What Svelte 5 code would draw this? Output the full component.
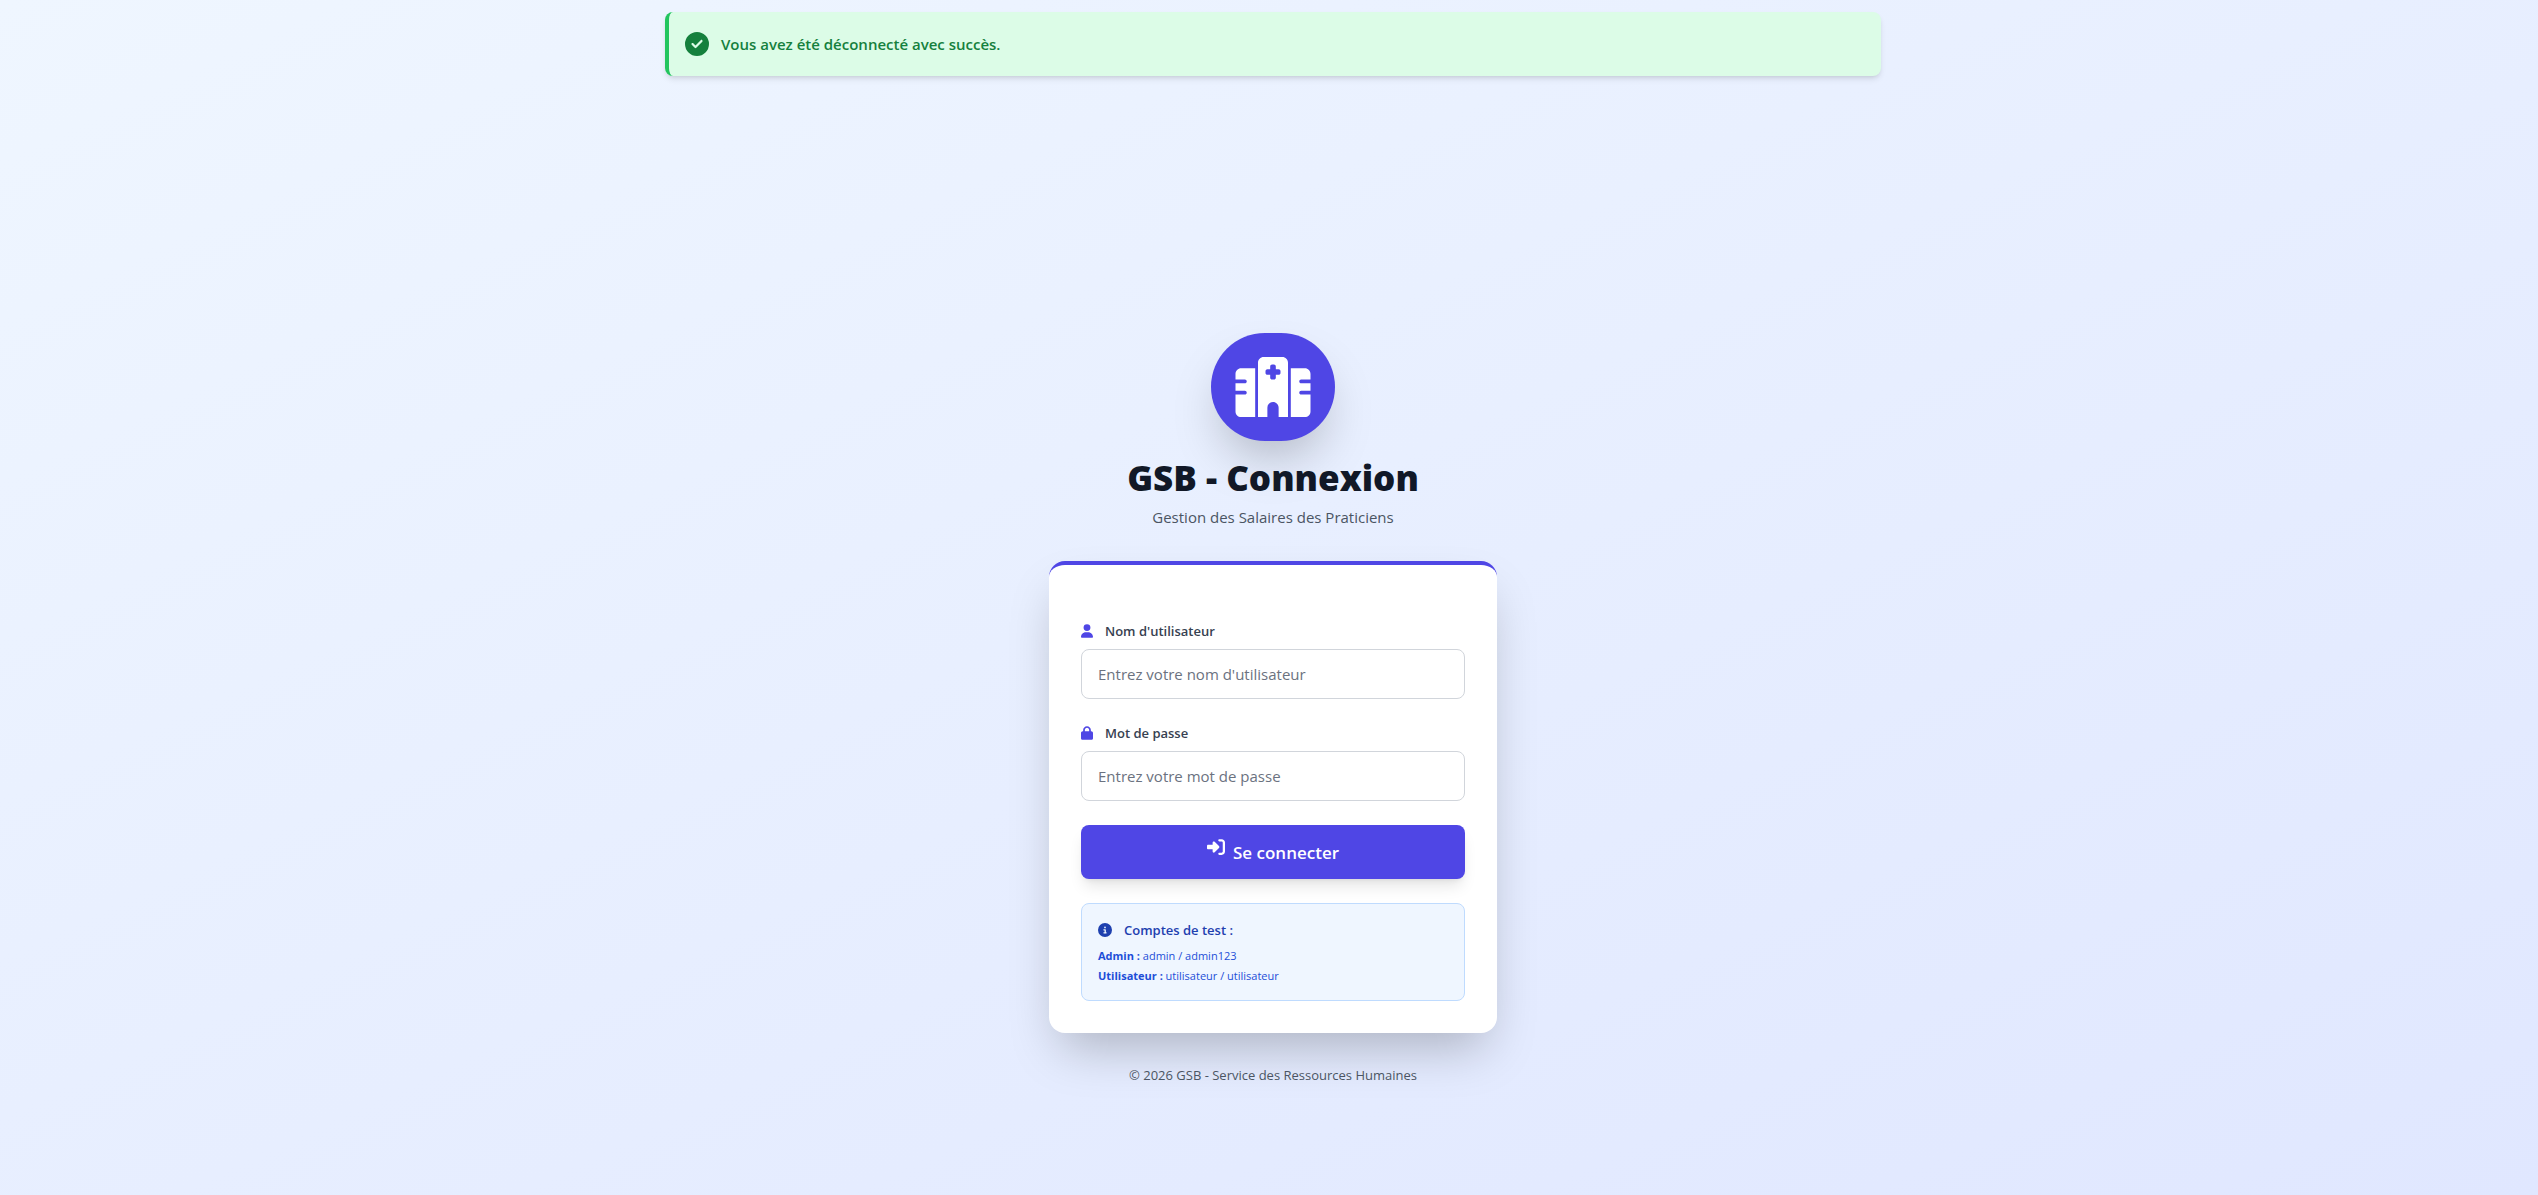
<script>
    const icons = {
        check: {
            box: '0 0 512 512',
            path: 'M256 512A256 256 0 1 0 256 0a256 256 0 1 0 0 512zM369 209L241 337c-9.4 9.4-24.6 9.4-33.9 0l-64-64c-9.4-9.4-9.4-24.6 0-33.9s24.6-9.4 33.9 0l47 47L335 175c9.4-9.4 24.6-9.4 33.9 0s9.4 24.6 0 33.9z'
        },
        hospital: {
            box: '0 0 640 512',
            path: 'M192 48c0-26.5 21.5-48 48-48H400c26.5 0 48 21.5 48 48V512H368V432c0-26.5-21.5-48-48-48s-48 21.5-48 48v80H192V48zM48 96H168V512H48c-26.5 0-48-21.5-48-48V320H80c8.8 0 16-7.2 16-16s-7.2-16-16-16H0V224H80c8.8 0 16-7.2 16-16s-7.2-16-16-16H0V144c0-26.5 21.5-48 48-48zm544 0c26.5 0 48 21.5 48 48v48H560c-8.8 0-16 7.2-16 16s7.2 16 16 16h80v64H560c-8.8 0-16 7.2-16 16s7.2 16 16 16h80V464c0 26.5-21.5 48-48 48H472V96H592zM312 64c-8.8 0-16 7.2-16 16v24H272c-8.8 0-16 7.2-16 16v16c0 8.8 7.2 16 16 16h24v24c0 8.8 7.2 16 16 16h16c8.8 0 16-7.2 16-16V152h24c8.8 0 16-7.2 16-16V120c0-8.8-7.2-16-16-16H344V80c0-8.8-7.2-16-16-16H312z'
        },
        user: {
            box: '0 0 448 512',
            path: 'M224 256A128 128 0 1 0 224 0a128 128 0 1 0 0 256zm-45.7 48C79.8 304 0 383.8 0 482.3C0 498.7 13.3 512 29.7 512H418.3c16.4 0 29.7-13.3 29.7-29.7C448 383.8 368.2 304 269.7 304H178.3z'
        },
        lock: {
            box: '0 0 448 512',
            path: 'M144 144v48H304V144c0-44.2-35.8-80-80-80s-80 35.8-80 80zM80 192V144C80 64.5 144.5 0 224 0s144 64.5 144 144v48h16c35.3 0 64 28.7 64 64V448c0 35.3-28.7 64-64 64H64c-35.3 0-64-28.7-64-64V256c0-35.3 28.7-64 64-64H80z'
        },
        login: {
            box: '0 0 512 512',
            path: 'M217.9 105.9L340.7 228.7c7.2 7.2 11.3 17.1 11.3 27.3s-4.1 20.1-11.3 27.3L217.9 406.1c-6.4 6.4-15 9.9-24 9.9c-18.7 0-33.9-15.2-33.9-33.9l0-62.1L32 320c-17.7 0-32-14.3-32-32l0-64c0-17.7 14.3-32 32-32l128 0 0-62.1c0-18.7 15.2-33.9 33.9-33.9c9 0 17.6 3.6 24 9.9zM352 416l64 0c17.7 0 32-14.3 32-32l0-256c0-17.7-14.3-32-32-32l-64 0c-17.7 0-32-14.3-32-32s14.3-32 32-32l64 0c53 0 96 43 96 96l0 256c0 53-43 96-96 96l-64 0c-17.7 0-32-14.3-32-32s14.3-32 32-32z'
        },
        info: {
            box: '0 0 512 512',
            path: 'M256 512A256 256 0 1 0 256 0a256 256 0 1 0 0 512zM216 336h24V272H216c-13.3 0-24-10.7-24-24s10.7-24 24-24h48c13.3 0 24 10.7 24 24v88h8c13.3 0 24 10.7 24 24s-10.7 24-24 24H216c-13.3 0-24-10.7-24-24s10.7-24 24-24zm40-208a32 32 0 1 1 0 64 32 32 0 1 1 0-64z'
        }
    };

    const accounts = [
        { role: 'Admin', login: 'admin', password: 'admin123' },
        { role: 'Utilisateur', login: 'utilisateur', password: 'utilisateur' }
    ];

    let username = $state('');
    let password = $state('');
</script>

{#snippet icon(name)}
    <svg class="icon icon-{name}" viewBox={icons[name].box} aria-hidden="true">
        <path d={icons[name].path} />
    </svg>
{/snippet}

<div class="page">
    <div class="messages">
        <div class="alert" role="status">
            {@render icon('check')}
            <span>Vous avez été déconnecté avec succès.</span>
        </div>
    </div>

    <main>
        <div class="login">
            <header>
                <div class="logo">{@render icon('hospital')}</div>
                <h1>GSB - Connexion</h1>
                <p>Gestion des Salaires des Praticiens</p>
            </header>

            <div class="card">
                <form onsubmit={(e) => e.preventDefault()}>
                    <div class="field">
                        <label for="username">{@render icon('user')}Nom d'utilisateur</label>
                        <input id="username" type="text" placeholder="Entrez votre nom d'utilisateur" bind:value={username}>
                    </div>
                    <div class="field">
                        <label for="password">{@render icon('lock')}Mot de passe</label>
                        <input id="password" type="password" placeholder="Entrez votre mot de passe" bind:value={password}>
                    </div>
                    <button type="submit">{@render icon('login')}Se connecter</button>
                </form>

                <div class="accounts">
                    <h2>{@render icon('info')}Comptes de test :</h2>
                    {#each accounts as account}
                        <p><strong>{account.role} :</strong> {account.login} / {account.password}</p>
                    {/each}
                </div>
            </div>

            <footer>© 2026 GSB - Service des Ressources Humaines</footer>
        </div>
    </main>
</div>

<style>
    :global(body) {
        margin: 0;
    }

    .page {
        background: linear-gradient(to bottom right, #eff6ff, #e0e7ff);
        box-sizing: border-box;
        color: #111827;
        display: flex;
        flex-direction: column;
        font-family: "Segoe UI", "Open Sans", "Noto Sans", sans-serif;
        font-size: 15px;
        line-height: 24px;
        min-height: 100vh;
        padding-left: 8px;
        padding-top: 12px;
    }

    h1,
    h2,
    p {
        margin: 0;
    }

    .icon {
        display: block;
        fill: currentColor;
        flex: none;
    }

    .messages {
        box-sizing: border-box;
        margin-inline: auto;
        max-width: 1280px;
        padding-inline: 32px;
        width: 100%;
    }

    .alert {
        align-items: center;
        background: #dcfce7;
        border-left: 4px solid #22c55e;
        border-radius: 8px;
        box-shadow: 0 4px 6px -1px rgb(0 0 0 / 0.1), 0 2px 4px -2px rgb(0 0 0 / 0.1);
        color: #15803d;
        display: flex;
        font-weight: 600;
        gap: 12px;
        padding: 20px 16px;
    }

    .icon-check {
        height: 24px;
        width: 24px;
    }

    main {
        align-items: center;
        display: flex;
        flex: 1;
        justify-content: center;
        padding: 147px 16px 0;
    }

    .login {
        max-width: 448px;
        width: 100%;
    }

    header {
        align-items: center;
        display: flex;
        flex-direction: column;
        margin-bottom: 32px;
        text-align: center;
    }

    .logo {
        background: #4f46e5;
        border-radius: 9999px;
        box-shadow: 0 25px 50px -12px rgb(0 0 0 / 0.25);
        color: #fff;
        margin-bottom: 16px;
        padding: 24px;
    }

    .icon-hospital {
        height: 60px;
        width: 76px;
    }

    h1 {
        font-size: 35px;
        font-weight: 800;
        line-height: 42px;
        margin-bottom: 6px;
    }

    header p {
        color: #4b5563;
    }

    .card {
        background: #fff;
        border-radius: 16px;
        border-top: 4px solid #4f46e5;
        box-shadow: 0 25px 50px -12px rgb(0 0 0 / 0.25);
        padding: 56px 32px 32px;
    }

    form {
        display: flex;
        flex-direction: column;
        gap: 24px;
    }

    .field {
        display: flex;
        flex-direction: column;
        gap: 8px;
    }

    label {
        align-items: center;
        color: #374151;
        display: flex;
        font-size: 13px;
        font-weight: 600;
        gap: 12px;
        line-height: 20px;
    }

    .icon-user,
    .icon-lock {
        color: #4f46e5;
        height: 14px;
        width: 12px;
    }

    input {
        background: #fff;
        border: 1px solid #d1d5db;
        border-radius: 8px;
        box-sizing: border-box;
        color: inherit;
        font: inherit;
        padding: 12px 16px;
        width: 100%;
    }

    input::placeholder {
        color: #6b7280;
        opacity: 1;
    }

    input:focus {
        border-color: #4f46e5;
        outline: 1px solid #4f46e5;
    }

    button {
        align-items: flex-start;
        background: #4f46e5;
        border: 0;
        border-radius: 8px;
        box-shadow: 0 10px 15px -3px rgb(0 0 0 / 0.1), 0 4px 6px -4px rgb(0 0 0 / 0.1);
        color: #fff;
        cursor: pointer;
        display: flex;
        font: inherit;
        font-size: 17px;
        font-weight: 600;
        gap: 8px;
        justify-content: center;
        line-height: 30px;
        padding: 13px 16px 11px;
    }

    button:hover {
        background: #4338ca;
    }

    .icon-login {
        height: 18px;
        width: 18px;
    }

    .accounts {
        background: #eff6ff;
        border: 1px solid #bfdbfe;
        border-radius: 8px;
        color: #1d4ed8;
        display: flex;
        flex-direction: column;
        font-size: 11px;
        gap: 4px;
        line-height: 16px;
        margin-top: 24px;
        padding: 16px;
    }

    h2 {
        align-items: center;
        color: #1e40af;
        display: flex;
        font-size: 13px;
        font-weight: 600;
        gap: 12px;
        line-height: 20px;
        margin-bottom: 4px;
    }

    .icon-info {
        height: 14px;
        width: 14px;
    }

    footer {
        color: #4b5563;
        font-size: 13px;
        line-height: 20px;
        margin-top: 32px;
        text-align: center;
    }
</style>
